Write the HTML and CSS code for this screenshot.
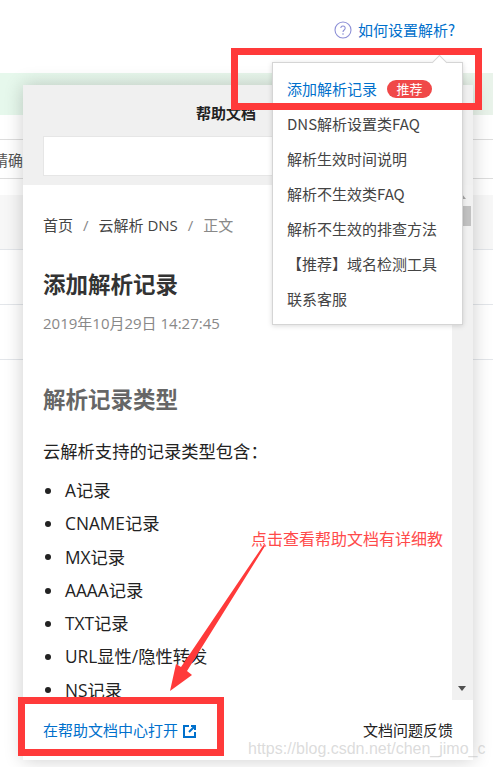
FILE: index.html
```html
<!DOCTYPE html>
<html lang="zh-CN">
<head>
<meta charset="utf-8">
<title>如何设置解析</title>
<link rel="stylesheet" href="styles.css">
</head>
<body>
<div class="page">
  <header class="topbar">
    <a class="help-link">
      <svg class="help-icon" viewBox="0 0 18 18" width="18" height="18"><circle cx="9" cy="9" r="8" fill="none" stroke="#8c8fd6" stroke-width="1.1"/><path d="M6.8 7.1a2.2 2.2 0 1 1 3.4 1.9c-.8.5-1.2.9-1.2 1.9" fill="none" stroke="#8c8fd6" stroke-width="1.1"/><circle cx="9" cy="13" r=".8" fill="#8c8fd6"/></svg>
      <span>如何设置解析?</span>
    </a>
  </header>
  <div class="band"></div>
  <div class="filter-row"><span class="filter-text">精确</span></div>
  <div class="table-row table-row-head"></div>
  <div class="table-row"></div>
  <div class="table-row"></div>

  <section class="panel">
    <div class="panel-head">
      <h3 class="panel-title">帮助文档</h3>
      <div class="panel-search"></div>
    </div>
    <div class="panel-body">
      <article class="doc">
        <nav class="crumbs"><span>首页</span><i>/</i><span>云解析 DNS</span><i>/</i><span class="crumb-now">正文</span></nav>
        <h1>添加解析记录</h1>
        <p class="date">2019年10月29日 14:27:45</p>
        <h2>解析记录类型</h2>
        <p class="lead">云解析支持的记录类型包含：</p>
        <ul>
          <li>A记录</li>
          <li>CNAME记录</li>
          <li>MX记录</li>
          <li>AAAA记录</li>
          <li>TXT记录</li>
          <li>URL显性/隐性转发</li>
          <li>NS记录</li>
        </ul>
      </article>
      <div class="scrollbar">
        <span class="arrow-up"></span>
        <span class="thumb"></span>
        <span class="arrow-down"></span>
      </div>
    </div>
    <footer class="panel-foot">
      <a class="open-link">在帮助文档中心打开
        <svg class="open-icon" viewBox="0 0 14 14" width="14" height="14"><path d="M6 2H1v11h11V8" fill="none" stroke="#0070cc" stroke-width="2"/><path d="M8 1h5v5h-2V4.4L6.7 8.7 5.3 7.3 9.6 3H8z" fill="#0070cc"/></svg>
      </a>
      <span class="feedback">文档问题反馈</span>
    </footer>
  </section>

  <div class="menu">
    <span class="menu-arrow"></span>
    <a class="menu-item menu-active">添加解析记录<em class="tag">推荐</em></a>
    <a class="menu-item">DNS解析设置类FAQ</a>
    <a class="menu-item">解析生效时间说明</a>
    <a class="menu-item">解析不生效类FAQ</a>
    <a class="menu-item">解析不生效的排查方法</a>
    <a class="menu-item">【推荐】域名检测工具</a>
    <a class="menu-item">联系客服</a>
  </div>

  <div class="mark mark-top"></div>
  <div class="mark mark-bottom"></div>
  <p class="note">点击查看帮助文档有详细教</p>
  <svg class="note-arrow" viewBox="0 0 493 767" width="493" height="767"><polygon points="265,546 187,671 192,675 170,691 176,664 181,667 263.5,545" fill="#ff3a3a"/></svg>
  <p class="watermark">https://blog.csdn.net/chen_jimo_c</p>
</div>
</body>
</html>
```
FILE: styles.css
```css
* { box-sizing: border-box; }
html, body { margin: 0; padding: 0; background: #fff; }
body { font-family: "Noto Sans CJK SC", "Liberation Sans", sans-serif; color: #333; }
.page { position: relative; width: 493px; height: 767px; overflow: hidden; background: #fff; }

.topbar { height: 73px; display: flex; justify-content: flex-end; align-items: flex-start; padding: 20px 38px 0 0; }
.help-link { display: flex; align-items: center; gap: 6px; height: 20px; font-size: 15px; line-height: 20px; color: #0070cc; }
.help-icon { flex: none; }

.band { height: 42px; background: linear-gradient(90deg, #e6f8ec, #e9f3ea); }
.filter-row { margin-top: 24px; border-top: 1px solid #ddd; border-bottom: 1px solid #ddd; height: 40px; display: flex; align-items: center; font-size: 15px; color: #555; }
.filter-text { margin-left: -7px; }
.table-row { height: 55px; border-bottom: 1px solid #e3e6ea; }
.table-row-head { height: 55px; margin-top: 16px; background: #f7f7f7; }

.panel { position: absolute; left: 23px; top: 85px; width: 450px; height: 675px; display: flex; flex-direction: column; background: #fff; box-shadow: 0 0 18px rgba(0, 0, 0, .2); }
.panel-head { flex: none; height: 100px; padding: 0 20px; background: #f0f0f0; }
.panel-title { margin: 18px 0 0 153px; font-size: 15px; line-height: 20px; font-weight: 700; color: #222; }
.panel-search { height: 40px; margin-top: 13px; background: #fff; border: 1px solid #e6e6e6; }

.panel-body { flex: 1; min-height: 0; display: flex; overflow: hidden; }
.doc { flex: 1; min-width: 0; padding: 28px 20px 0; font-family: "Open Sans", "Noto Sans CJK SC", sans-serif; }
.crumbs { display: flex; gap: 10px; font-size: 15px; line-height: 24px; color: #444; }
.crumbs i { font-style: normal; color: #888; }
.crumb-now { color: #888; }
h1 { margin: 32px 0 0; font-size: 22.5px; line-height: 32px; font-weight: 700; color: #333; }
.date { margin: 11px 0 0; font-size: 15px; line-height: 22px; color: #888; }
h2 { margin: 50px 0 0; font-size: 22.5px; line-height: 32px; font-weight: 700; color: #666; }
.lead { margin: 22px 0 0; font-size: 17.3px; line-height: 28px; color: #222; }
ul { margin: 8px 0 0; padding: 0 0 0 22px; list-style: none; font-size: 17.3px; line-height: 33.3px; color: #222; }
li { display: flex; align-items: center; height: 33.3px; white-space: nowrap; }
li::before { content: ""; flex: none; width: 6px; height: 6px; margin: 0 14px 0 -20px; border-radius: 50%; background: #222; }

.scrollbar { flex: none; width: 21px; position: relative; background: #f1f1f1; }
.thumb { position: absolute; left: 0; right: 2px; top: 21px; height: 20px; background: #c1c1c1; }
.arrow-up { position: absolute; left: 6px; top: 9px; border: 4px solid transparent; border-top: 0; border-bottom: 5px solid #a3a3a3; }
.arrow-down { position: absolute; left: 6px; bottom: 9px; border: 4.5px solid transparent; border-bottom: 0; border-top: 5px solid #505050; }

.panel-foot { flex: none; height: 60px; padding: 0 20px 2px; display: flex; align-items: center; justify-content: space-between; background: #fff; font-size: 15px; }
.open-link { display: flex; align-items: center; gap: 5px; color: #0070cc; }
.open-icon { margin-top: 4px; }
.feedback { color: #222; }

.menu { position: absolute; left: 272px; top: 62px; width: 191px; height: 263px; padding: 8px 0 0 14px; background: #fff; border: 1px solid #d5d5d5; box-shadow: 0 1px 5px rgba(0, 0, 0, .15); }
.menu-arrow { position: absolute; left: 161px; top: -6px; width: 11px; height: 11px; background: #fff; border-left: 1px solid #d5d5d5; border-top: 1px solid #d5d5d5; transform: rotate(45deg); }
.menu-item { display: flex; align-items: center; position: relative; height: 35px; font-size: 15px; color: #444; white-space: nowrap; }
.menu-active { color: #0070cc; }
.tag { margin-left: 10px; width: 45px; height: 18px; border-radius: 9px; background: #f04848; color: #fff; font-size: 13px; font-style: normal; line-height: 18px; text-align: center; }

.mark { position: absolute; border: 7px solid #ff3a3a; }
.mark-top { left: 231px; top: 48px; width: 251px; height: 62px; }
.mark-bottom { left: 18px; top: 697px; width: 206px; height: 59px; }
.note { position: absolute; left: 251px; top: 528px; margin: 0; font-size: 16px; line-height: 20px; color: #ff4a4a; white-space: nowrap; }
.note-arrow { position: absolute; left: 0; top: 0; pointer-events: none; }
.watermark { position: absolute; left: 248px; top: 740px; margin: 0; font-family: "Liberation Sans", sans-serif; font-size: 16px; line-height: 18px; color: rgba(190, 190, 190, .55); white-space: nowrap; }
```
